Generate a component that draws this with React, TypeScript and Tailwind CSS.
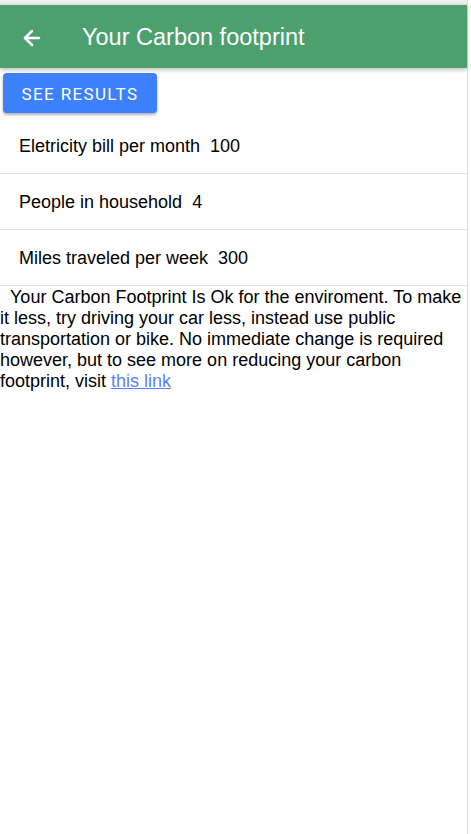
import { ArrowLeft } from "lucide-react";

const rows = [
  { label: "Eletricity bill per month", value: "100" },
  { label: "People in household", value: "4" },
  { label: "Miles traveled per week", value: "300" },
];

export default function App() {
  return (
    <div className="flex min-h-[834px] w-[471px] bg-white font-['Liberation_Sans',Arial,sans-serif] text-black">
      <div className="flex w-[468px] flex-col border-r border-[#dcdcdc]">
        <div className="h-[5px] bg-gradient-to-b from-[#f2f2f2] to-[#e6e6e6]" />
        <header className="flex h-[63px] items-center bg-[#4ca06e] pt-[2px] text-white shadow-[0_2px_4px_rgba(0,0,0,0.25)]">
          <ArrowLeft className="ml-[20px] h-6 w-6" strokeWidth={2.5} />
          <h1 className="ml-[38px] text-[23.5px] leading-none">Your Carbon footprint</h1>
        </header>

        <div className="px-[3px] pt-[5px]">
          <button className="h-10 w-[154px] rounded bg-[#3c80fc] pt-[3px] font-['Roboto',sans-serif] text-[17px] tracking-[0.08em] text-white shadow-[0_2px_3px_rgba(0,0,0,0.3)]">
            SEE RESULTS
          </button>
        </div>

        <ul className="mt-[5px]">
          {rows.map((r) => (
            <li key={r.label} className="flex h-14 items-center border-b border-[#e0e0e0] pl-[19px] pt-[2px] text-[18px]">
              <span>{r.label}</span>
              <span className="ml-[10px]">{r.value}</span>
            </li>
          ))}
        </ul>

        <p className="pt-px text-[18px] leading-[21px]">
          {"\u00a0\u00a0"}Your Carbon Footprint Is Ok for the enviroment. To make it less, try driving your car less,
          instead use public transportation or bike. No immediate change is required however, but to see more on
          reducing your carbon footprint, visit{" "}
          <a href="#" className="text-[#5b7ff5] underline">
            this link
          </a>
        </p>
      </div>
    </div>
  );
}
